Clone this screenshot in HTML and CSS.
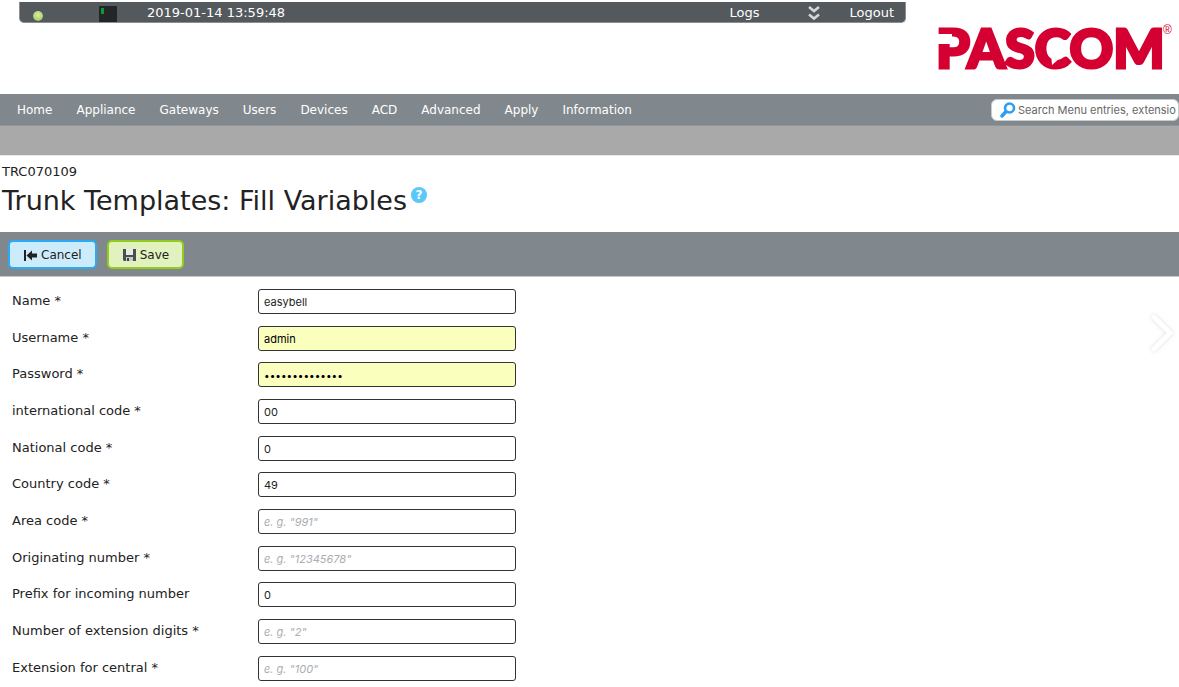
FILE: index.html
```
<!DOCTYPE html>
<html lang="en">
<head>
    <meta charset="utf-8" />
    <title>Trunk Templates: Fill Variables</title>
    <link rel="stylesheet" href="styles.css">
</head>
<body>
    <header class="header">
        <div class="statusBar">
            <span class="led"></span>
            <span class="display"></span>
            <time class="clock" datetime="2019-01-14T13:59:48">2019-01-14 13:59:48</time>
            <a class="logs" href="#">Logs</a>
            <button class="expand" type="button" aria-label="Expand">
                <svg width="14" height="16" viewBox="0 0 14 16">
                    <path d="M2 2l5 4 5-4M2 9.500l5 4 5-4" fill="none" stroke="#d4d6d7" stroke-width="2.600" />
                </svg>
            </button>
            <a href="#">Logout</a>
        </div>
        <a class="logo" href="#" aria-label="Pascom">
            <svg width="240" height="64" viewBox="0 0 240 64">
                <text class="logoText" x="-2" y="49">PASCOM</text>
                <!-- open bowl of the P and the speech bubble tail in the C -->
                <path d="M0 15h14v10H0z" fill="#fff" />
                <path d="M113 35l1 11 8-7z" fill="#fff" />
                <text class="logoMark" x="225" y="15">®</text>
            </svg>
        </a>
    </header>

    <nav class="menu">
        <a href="#">Home</a>
        <a href="#">Appliance</a>
        <a href="#">Gateways</a>
        <a href="#">Users</a>
        <a href="#">Devices</a>
        <a href="#">ACD</a>
        <a href="#">Advanced</a>
        <a href="#">Apply</a>
        <a href="#">Information</a>
        <label class="search">
            <svg width="16" height="16" viewBox="0 0 16 16">
                <circle cx="9.500" cy="6" r="4.500" fill="none" stroke="#2b9df4" stroke-width="2.600" />
                <path d="M6 9.500L2 14" stroke="#2b9df4" stroke-width="3.400" stroke-linecap="round" />
            </svg>
            <input type="text" aria-label="Search" placeholder="Search Menu entries, extensio">
        </label>
    </nav>
    <div class="subMenu"></div>

    <main>
        <div class="pageTitle">
            <div class="pageId">TRC070109</div>
            <div class="titleRow">
                <h1>Trunk Templates: Fill Variables</h1>
                <a class="help" href="#">?</a>
            </div>
        </div>

        <div class="toolbar">
            <button class="btn cancel" type="button">
                <svg width="13" height="12" viewBox="0 0 13 12">
                    <path d="M0 1h2v11H0zM2.500 6.500L8 1.500V4.500h5v4H8v3z" fill="#222" />
                </svg>
                Cancel
            </button>
            <button class="btn save" type="submit" form="variables">
                <svg width="13" height="13" viewBox="0 0 13 13">
                    <path d="M0 1h13v12H1L0 12z" fill="#4a4d51" />
                    <path d="M3 1h7v6H3z" fill="#e8ebe4" />
                    <path d="M3 9h7v4H3z" fill="#c6cbc4" />
                    <path d="M4 10h2v3H4z" fill="#3d4044" />
                </svg>
                Save
            </button>
        </div>

        <div class="content">
            <form class="form" id="variables">
                <div class="row">
                    <label for="name">Name *</label>
                    <input type="text" id="name" value="easybell">
                </div>
                <div class="row">
                    <label for="username">Username *</label>
                    <input class="filled" type="text" id="username" value="admin">
                </div>
                <div class="row">
                    <label for="password">Password *</label>
                    <input class="filled" type="password" id="password" value="abcdefghijklmn">
                </div>
                <div class="row">
                    <label for="international">international code *</label>
                    <input type="text" id="international" value="00">
                </div>
                <div class="row">
                    <label for="national">National code *</label>
                    <input type="text" id="national" value="0">
                </div>
                <div class="row">
                    <label for="country">Country code *</label>
                    <input type="text" id="country" value="49">
                </div>
                <div class="row">
                    <label for="area">Area code *</label>
                    <input type="text" id="area" placeholder="e. g. &quot;991&quot;">
                </div>
                <div class="row">
                    <label for="originating">Originating number *</label>
                    <input type="text" id="originating" placeholder="e. g. &quot;12345678&quot;">
                </div>
                <div class="row">
                    <label for="prefix">Prefix for incoming number</label>
                    <input type="text" id="prefix" value="0">
                </div>
                <div class="row">
                    <label for="digits">Number of extension digits *</label>
                    <input type="text" id="digits" placeholder="e. g. &quot;2&quot;">
                </div>
                <div class="row">
                    <label for="central">Extension for central *</label>
                    <input type="text" id="central" placeholder="e. g. &quot;100&quot;">
                </div>
            </form>
            <button class="next" type="button" aria-label="Next">
                <svg width="32" height="48" viewBox="0 0 32 48">
                    <path d="M7 8l16 16L7 40" fill="none" stroke="#fff" stroke-width="5" stroke-linecap="round" />
                </svg>
            </button>
        </div>
    </main>
</body>
</html>
```
FILE: styles.css
```
* {
    box-sizing: border-box;
}

body {
    margin: 0;
    background-color: #fff;
    color: #222;
    font-family: Verdana, "DejaVu Sans", sans-serif;
    font-size: 13px;
}

a {
    color: inherit;
    text-decoration: none;
}

button {
    font: inherit;
    color: inherit;
    cursor: pointer;
}

svg {
    display: block;
    flex: none;
}

.header {
    display: flex;
    align-items: flex-start;
    height: 94px;
    padding: 2px 0 0 19px;
}

.statusBar {
    display: flex;
    flex: 1;
    align-items: center;
    height: 21px;
    padding: 0 11px 0 13px;
    border: 1px solid #8b8f91;
    border-top: none;
    border-radius: 0 0 5px 5px;
    background-color: #54595d;
    color: #fff;
}

.led {
    width: 10px;
    height: 10px;
    margin-top: 7px;
    border-radius: 50%;
    background: radial-gradient(circle at 50% 40%, #dcf0a8, #8fbf4d);
}

.display {
    width: 18px;
    height: 16px;
    margin: 4px 30px 0 56px;
    background: linear-gradient(#0a9a35, #0a9a35) 2px 2px / 3px 6px no-repeat, #242526;
}

.logs {
    margin-left: auto;
}

.expand {
    margin: 2px 28px 0 48px;
    padding: 0;
    border: none;
    background: none;
}

.logo {
    margin: 17px 1px 0 32px;
}

.logoText {
    fill: #d50032;
    stroke: #d50032;
    stroke-width: 3px;
    font-family: Lato, sans-serif;
    font-size: 54px;
    font-weight: 900;
}

.logoMark {
    fill: #d50032;
    font-family: "Liberation Sans", sans-serif;
    font-size: 12px;
}

.menu {
    display: flex;
    align-items: center;
    gap: 24px;
    height: 32px;
    padding: 1px 0 0 17px;
    border-bottom: 1px solid #8f9498;
    background-color: #81888d;
    color: #fff;
    font-size: 12px;
}

.search {
    display: flex;
    align-items: center;
    gap: 2px;
    width: 188px;
    height: 22px;
    margin-left: auto;
    padding: 0 0 0 8px;
    border: 1px solid #c9cccd;
    border-radius: 6px;
    background-color: #fff;
}

    .search input {
        flex: 1;
        min-width: 0;
        padding: 0;
        border: none;
        outline: none;
        background: none;
        font-family: Inter, sans-serif;
        font-size: 11px;
    }

    .search input::placeholder {
        color: #666;
    }

.subMenu {
    height: 30px;
    border-bottom: 1px solid #e8e8e8;
    background-color: #a9a9a9;
}

.pageTitle {
    height: 76px;
    padding: 7px 2px 0;
}

.pageId {
    line-height: 17px;
}

.titleRow {
    display: flex;
    align-items: flex-start;
    gap: 4px;
}

h1 {
    margin: 4px 0 0;
    font-size: 27px;
    font-weight: normal;
    line-height: 34px;
}

.help {
    width: 16px;
    height: 16px;
    margin-top: 7px;
    border-radius: 50%;
    background-color: #5bc8fa;
    color: #fff;
    font-size: 12px;
    font-weight: bold;
    line-height: 16px;
    text-align: center;
}

.toolbar {
    display: flex;
    gap: 10px;
    padding: 8px 8px 7px;
    border-bottom: 1px solid #c4c7c9;
    background-color: #81888d;
}

.btn {
    display: flex;
    align-items: center;
    gap: 4px;
    height: 29px;
    padding: 0 13px 0 14px;
    border: 2px solid;
    border-radius: 5px;
    font-size: 12px;
}

.cancel {
    border-color: #29abf5;
    background-color: #cdecfb;
}

.save {
    border-color: #94cb1f;
    background-color: #e2f2be;
}

.content {
    display: flex;
    justify-content: space-between;
    align-items: flex-start;
    padding: 12px 0 0 12px;
}

.row {
    display: flex;
    align-items: flex-start;
    height: 37px;
}

    .row:nth-child(3n+2) {
        height: 36px;
    }

    .row label {
        width: 246px;
        font-size: 13px;
        line-height: 23px;
    }

    .row input {
        width: 258px;
        height: 25px;
        padding: 0 5px;
        border: 1px solid #333;
        border-radius: 3px;
        background-color: #fff;
        color: #222;
        font-family: Inter, sans-serif;
        font-size: 11px;
    }

    .row input[type=password] {
        font-size: 10px;
    }

    .row .filled {
        background-color: #faffbd;
        color: #000;
    }

    .row input::placeholder {
        color: #aaaeb1;
        font-style: italic;
    }

.next {
    margin-top: 20px;
    padding: 0;
    border: none;
    background: none;
    filter: drop-shadow(0 0 2px #ddd);
}
```
